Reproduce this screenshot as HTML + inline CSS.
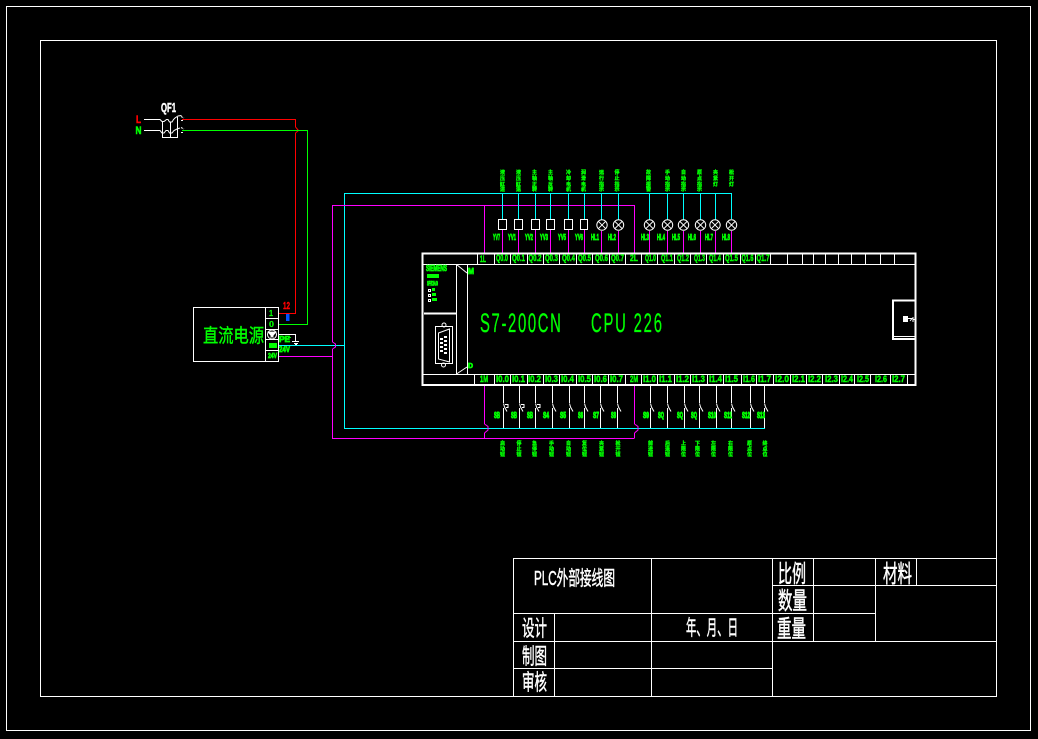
<!DOCTYPE html>
<html><head><meta charset="utf-8"><title>PLC外部接线图</title>
<style>
html,body{margin:0;padding:0;background:#000;width:1038px;height:739px;overflow:hidden}
svg{display:block}
.l{fill:none;stroke:#fff;stroke-width:1;shape-rendering:crispEdges}
.d{fill:none;stroke:#fff;stroke-width:1}
.c{fill:none;stroke:#00ffff;stroke-width:1;shape-rendering:crispEdges}
.m{fill:none;stroke:#ff00ff;stroke-width:1;shape-rendering:crispEdges}
.r{fill:none;stroke:#ff0000;stroke-width:1}
.g{fill:none;stroke:#00ff00;stroke-width:1}
text{font-family:"Liberation Sans","Noto Sans CJK SC",sans-serif}
.w{fill:#fff;font-family:"Liberation Sans","Noto Sans CJK SC",sans-serif;stroke:#fff;stroke-width:.5}
.t{fill:#0f0;stroke:#0f0;stroke-width:.5;font-size:9.5px;font-weight:bold}
.s{fill:#0f0;stroke:#0f0;stroke-width:.35;font-size:5px;font-weight:bold}
.b{fill:#0f0;stroke:#0f0;stroke-width:.8;font-size:8px;font-weight:bold}
</style></head><body>
<svg xmlns="http://www.w3.org/2000/svg" width="1038" height="739" viewBox="0 0 1038 739">
<defs>
<g id="lamp"><circle cx="0" cy="0" r="5.2" fill="none" stroke="#fff" stroke-width="1"/><path d="M-3.7-3.7L3.7 3.7M-3.7 3.7L3.7-3.7" stroke="#fff" stroke-width="1" fill="none"/></g>
<path id="sw" d="M0 403.500L1 407L3.500 411.500" fill="none" stroke="#fff" stroke-width="1"/>
</defs>
<rect width="1038" height="739" fill="#000"/>
<rect class="l" x="6.500" y="6.500" width="1024" height="724"/>
<rect class="l" x="40.500" y="40.500" width="956" height="656"/>

<!-- breaker -->
<text x="136" y="123" font-size="11" font-weight="bold" fill="#f00" stroke="#f00" stroke-width=".6" textLength="5" lengthAdjust="spacingAndGlyphs">L</text>
<text x="135.500" y="134" font-size="11" font-weight="bold" fill="#0f0" stroke="#0f0" stroke-width=".6" textLength="6" lengthAdjust="spacingAndGlyphs">N</text>
<text class="w" x="161" y="112" font-size="13" font-weight="bold" textLength="15" lengthAdjust="spacingAndGlyphs">QF1</text>
<path class="d" d="M144 119.500H160L162 121.500H164L166.500 119.500H168L169.500 122H172L173.500 119.500L175 118L178 116L181.500 115.500"/>
<path class="d" d="M144 130.500H160L162 133H164L166 130.500H168L169.500 133H172L174 130.500L177 129L180 128"/>
<path class="l" d="M162.500 122V137.500H177.500V117M170.500 122V137.500"/>
<path class="d" d="M181 116.500L184 118M181 120.500H184M181 127.500L184 129M181 132.500H184" stroke-dasharray="2 1"/>
<path class="r" style="shape-rendering:crispEdges" d="M182 119.500H295.500V127"/>
<path class="r" d="M295.500 127L298.500 130.500L295.500 133"/>
<path class="r" style="shape-rendering:crispEdges" d="M295.500 133V313.500H279"/>
<path class="g" style="shape-rendering:crispEdges" d="M182 130.500H307.500V324.500H279"/>

<!-- power supply -->
<rect class="l" x="193.500" y="307.500" width="85" height="54"/>
<path class="l" d="M265.500 307V361M265 318.500H279M265 329.500H279M265 339.500H279M265 350.500H279"/>
<text x="203" y="342" font-size="19" fill="#0f0" stroke="#0f0" stroke-width=".4" textLength="61" lengthAdjust="spacingAndGlyphs">直流电源</text>
<text class="t" x="269" y="316" style="font-size:8px;stroke-width:.2" textLength="4" lengthAdjust="spacingAndGlyphs">1</text>
<text class="t" x="269" y="327" style="font-size:8px;stroke-width:.2" textLength="5" lengthAdjust="spacingAndGlyphs">0</text>
<circle cx="272" cy="334.500" r="4.500" fill="none" stroke="#fff" stroke-width="1"/>
<path d="M268 332L276 332L272 337Z M270 337H274" fill="#fff" stroke="#fff" stroke-width=".7"/>
<rect x="269" y="343" width="8" height="5" fill="#0f0"/>
<text class="t" x="268" y="358" style="font-size:7px;stroke-width:.7" textLength="9" lengthAdjust="spacingAndGlyphs">24V</text>
<text x="283" y="309" font-size="10" font-weight="bold" fill="#f00" stroke="#f00" stroke-width=".4" textLength="7" lengthAdjust="spacingAndGlyphs">12</text>
<rect x="286" y="314" width="3.500" height="7" fill="#0050ff"/>
<path class="l" d="M279 334.500H295.500V341"/>
<path class="l" d="M292 341.500H299M294 343.500H298M295 344.500H297"/>
<text class="b" x="279" y="342" style="font-size:8px" textLength="11" lengthAdjust="spacingAndGlyphs">PE</text>
<text class="b" x="279" y="352" style="font-size:8px" textLength="11" lengthAdjust="spacingAndGlyphs">24V</text>
<path class="g" style="shape-rendering:crispEdges" d="M288 337.500H291"/>

<!-- buses -->
<path class="c" d="M279 345.500H344.500V193.500H731.500V219M344.500 345V428.500H765"/>
<path class="m" d="M279 356.500H332.500M332.500 342V205.500H634.500V253M484.500 205V253"/>
<path d="M332.500 342L335.500 344L335.500 347L332.500 349" fill="none" stroke="#f0f" stroke-width="1"/>
<path class="m" d="M332.500 349V438.500H634.500M484.500 385V424M484.500 433V438M634.500 385V424M634.500 433V438"/>
<path d="M484.500 424L488 426.500V430L484.500 433M634.500 424L638 426.500V430L634.500 433" fill="none" stroke="#f0f" stroke-width="1"/>

<!-- top cyan drops -->
<path class="c" d="M502.500 193V219M518.500 193V219M535.500 193V219M550.500 193V219M568.500 193V219M584.500 193V219M601.500 193V220M618.500 193V220M649.500 193V220M667.500 193V220M683.500 193V220M700.500 193V220M715.500 193V220"/>
<path class="m" d="M502.500 229V253M518.500 229V253M535.500 229V253M550.500 229V253M568.500 229V253M584.500 229V253M601.500 231V253M618.500 231V253M649.500 231V253M667.500 231V253M683.500 231V253M700.500 231V253M715.500 231V253M731.500 231V253"/>
<rect class="l" x="498.500" y="219.500" width="8" height="10"/>
<rect class="l" x="514.500" y="219.500" width="8" height="10"/>
<rect class="l" x="531.500" y="219.500" width="8" height="10"/>
<rect class="l" x="546.500" y="219.500" width="8" height="10"/>
<rect class="l" x="564.500" y="219.500" width="8" height="10"/>
<rect class="l" x="580.500" y="219.500" width="7" height="10"/>
<use href="#lamp" x="602" y="225"/><use href="#lamp" x="618.500" y="225"/>
<use href="#lamp" x="649.500" y="225"/><use href="#lamp" x="667.500" y="225"/><use href="#lamp" x="683.500" y="225"/><use href="#lamp" x="700.500" y="225"/><use href="#lamp" x="715" y="225"/><use href="#lamp" x="731.500" y="225"/>

<!-- labels below coils -->
<g class="b">
<text x="493" y="240" textLength="7" lengthAdjust="spacingAndGlyphs">YV7</text>
<text x="508" y="240" textLength="8" lengthAdjust="spacingAndGlyphs">YV1</text>
<text x="525" y="240" textLength="8" lengthAdjust="spacingAndGlyphs">YV2</text>
<text x="540" y="240" textLength="8" lengthAdjust="spacingAndGlyphs">YV3</text>
<text x="558" y="240" textLength="8" lengthAdjust="spacingAndGlyphs">YV5</text>
<text x="575" y="240" textLength="8" lengthAdjust="spacingAndGlyphs">YV6</text>
<text x="591" y="240" textLength="8" lengthAdjust="spacingAndGlyphs">HL1</text>
<text x="608" y="240" textLength="8" lengthAdjust="spacingAndGlyphs">HL2</text>
<text x="641" y="240" textLength="8" lengthAdjust="spacingAndGlyphs">HL3</text>
<text x="657" y="240" textLength="8" lengthAdjust="spacingAndGlyphs">HL4</text>
<text x="672" y="240" textLength="8" lengthAdjust="spacingAndGlyphs">HL5</text>
<text x="688" y="240" textLength="8" lengthAdjust="spacingAndGlyphs">HL6</text>
<text x="705" y="240" textLength="8" lengthAdjust="spacingAndGlyphs">HL7</text>
<text x="722" y="240" textLength="8" lengthAdjust="spacingAndGlyphs">HL8</text>
</g>

<!-- top stacked labels -->
<g class="s">
<text x="500 500 500 500" y="174 180 186 191">液压缸进</text>
<text x="516 516 516 516" y="174 180 186 191">液压缸退</text>
<text x="532 532 532 532" y="174 180 186 191">主轴正转</text>
<text x="548 548 548 548" y="174 180 186 191">主轴反转</text>
<text x="566 566 566 566" y="174 180 186 191">冷却电机</text>
<text x="581 581 581 581" y="174 180 186 191">润滑电机</text>
<text x="599 599 599 599" y="174 180 186 191">运行指示</text>
<text x="614.500 614.500 614.500 614.500" y="174 180 186 191">停止指示</text>
<text x="646 646 646 646" y="174 180 186 191">故障报警</text>
<text x="665 665 665 665" y="174 180 186 191">手动指示</text>
<text x="681 681 681 681" y="174 180 186 191">自动指示</text>
<text x="697 697 697 697" y="174 180 186 191">原点指示</text>
<text x="713 713 713" y="174 180 186">夹紧灯</text>
<text x="729 729 729" y="174 180 186">松开灯</text>
</g>

<!-- PLC body -->
<rect x="422.500" y="253.500" width="493" height="131.500" fill="none" stroke="#fff" stroke-width="2" shape-rendering="crispEdges"/>
<path class="l" d="M423 264.500H915M423 374.500H915M456.500 264V374M467.500 264V374"/>
<path d="M424 313.500H456" stroke="#fff" stroke-width="2" shape-rendering="crispEdges"/>
<path class="d" d="M456.500 264.500L467 273M456.500 374L467 367"/>
<path class="l" d="M477.500 254V264M494.500 254V264M510.500 254V264M527.500 254V264M543.500 254V264M559.500 254V264M576.500 254V264M592.500 254V264M609.500 254V264M625.500 254V264M641.500 254V264M657.500 254V264M674.500 254V264M690.500 254V264M706.500 254V264M723.500 254V264M740.500 254V264M755.500 254V264M770.500 254V264M787.500 254V264M802.500 254V264M813.500 254V264M825.500 254V264M838.500 254V264M851.500 254V264M865.500 254V264M880.500 254V264M894.500 254V264"/>
<path class="l" d="M474.500 375V385M494.500 375V385M510.500 375V385M527.500 375V385M543.500 375V385M559.500 375V385M576.500 375V385M592.500 375V385M608.500 375V385M625.500 375V385M641.500 375V385M657.500 375V385M674.500 375V385M690.500 375V385M707.500 375V385M723.500 375V385M741.500 375V385M756.500 375V385M773.500 375V385M790.500 375V385M806.500 375V385M822.500 375V385M839.500 375V385M854.500 375V385M870.500 375V385M890.500 375V385M907.500 375V385"/>

<!-- top terminal labels -->
<g class="t">
<text x="480" y="262" textLength="6" lengthAdjust="spacingAndGlyphs">1L</text>
<text x="496" y="261" textLength="12" lengthAdjust="spacingAndGlyphs">Q0.0</text>
<text x="512" y="261" textLength="13" lengthAdjust="spacingAndGlyphs">Q0.1</text>
<text x="528.500" y="261" textLength="13" lengthAdjust="spacingAndGlyphs">Q0.2</text>
<text x="545" y="261" textLength="13" lengthAdjust="spacingAndGlyphs">Q0.3</text>
<text x="562" y="261" textLength="13" lengthAdjust="spacingAndGlyphs">Q0.4</text>
<text x="578" y="261" textLength="13" lengthAdjust="spacingAndGlyphs">Q0.5</text>
<text x="595" y="261" textLength="13" lengthAdjust="spacingAndGlyphs">Q0.6</text>
<text x="611" y="261" textLength="13" lengthAdjust="spacingAndGlyphs">Q0.7</text>
<text x="630" y="261" textLength="8" lengthAdjust="spacingAndGlyphs">2L</text>
<text x="645" y="261" textLength="11" lengthAdjust="spacingAndGlyphs">Q1.0</text>
<text x="661" y="261" textLength="12" lengthAdjust="spacingAndGlyphs">Q1.1</text>
<text x="677" y="261" textLength="12" lengthAdjust="spacingAndGlyphs">Q1.2</text>
<text x="694" y="261" textLength="11" lengthAdjust="spacingAndGlyphs">Q1.3</text>
<text x="709" y="261" textLength="12" lengthAdjust="spacingAndGlyphs">Q1.4</text>
<text x="725" y="261" textLength="13" lengthAdjust="spacingAndGlyphs">Q1.5</text>
<text x="741.500" y="261" textLength="12" lengthAdjust="spacingAndGlyphs">Q1.6</text>
<text x="756.500" y="261" textLength="13" lengthAdjust="spacingAndGlyphs">Q1.7</text>
</g>
<!-- bottom terminal labels -->
<g class="t">
<text x="480" y="382" textLength="8" lengthAdjust="spacingAndGlyphs">1M</text>
<text x="496" y="382" textLength="13" lengthAdjust="spacingAndGlyphs">I0.0</text>
<text x="512" y="382" textLength="13" lengthAdjust="spacingAndGlyphs">I0.1</text>
<text x="528" y="382" textLength="13" lengthAdjust="spacingAndGlyphs">I0.2</text>
<text x="545" y="382" textLength="13" lengthAdjust="spacingAndGlyphs">I0.3</text>
<text x="561" y="382" textLength="13" lengthAdjust="spacingAndGlyphs">I0.4</text>
<text x="578" y="382" textLength="13" lengthAdjust="spacingAndGlyphs">I0.5</text>
<text x="594" y="382" textLength="13" lengthAdjust="spacingAndGlyphs">I0.6</text>
<text x="610" y="382" textLength="13" lengthAdjust="spacingAndGlyphs">I0.7</text>
<text x="630" y="382" textLength="8" lengthAdjust="spacingAndGlyphs">2M</text>
<text x="643" y="382" textLength="13" lengthAdjust="spacingAndGlyphs">I1.0</text>
<text x="659" y="382" textLength="13" lengthAdjust="spacingAndGlyphs">I1.1</text>
<text x="676" y="382" textLength="13" lengthAdjust="spacingAndGlyphs">I1.2</text>
<text x="692" y="382" textLength="13" lengthAdjust="spacingAndGlyphs">I1.3</text>
<text x="709" y="382" textLength="13" lengthAdjust="spacingAndGlyphs">I1.4</text>
<text x="725" y="382" textLength="13" lengthAdjust="spacingAndGlyphs">I1.5</text>
<text x="743" y="382" textLength="12" lengthAdjust="spacingAndGlyphs">I1.6</text>
<text x="758" y="382" textLength="13" lengthAdjust="spacingAndGlyphs">I1.7</text>
<text x="775" y="382" textLength="14" lengthAdjust="spacingAndGlyphs">I2.0</text>
<text x="792" y="382" textLength="13" lengthAdjust="spacingAndGlyphs">I2.1</text>
<text x="808" y="382" textLength="13" lengthAdjust="spacingAndGlyphs">I2.2</text>
<text x="825" y="382" textLength="13" lengthAdjust="spacingAndGlyphs">I2.3</text>
<text x="841" y="382" textLength="12" lengthAdjust="spacingAndGlyphs">I2.4</text>
<text x="857" y="382" textLength="12" lengthAdjust="spacingAndGlyphs">I2.5</text>
<text x="875" y="382" textLength="12" lengthAdjust="spacingAndGlyphs">I2.6</text>
<text x="892" y="382" textLength="13" lengthAdjust="spacingAndGlyphs">I2.7</text>
</g>

<!-- main label -->
<text transform="translate(480,332) scale(.55,1)" x="0" y="0" font-size="27" fill="#0f0" stroke="#0f0" stroke-width=".3" textLength="147">S7-200CN</text>
<text transform="translate(591,332) scale(.55,1)" x="0" y="0" font-size="27" fill="#0f0" stroke="#0f0" stroke-width=".3" textLength="129">CPU 226</text>

<!-- left panel -->
<text class="b" x="426" y="271" style="font-size:8px" textLength="21" lengthAdjust="spacingAndGlyphs">SIEMENS</text>
<rect x="427" y="274" width="12" height="4" fill="#0f0"/>
<text class="b" x="427" y="285.500" style="font-size:6px" textLength="11" lengthAdjust="spacingAndGlyphs">SF/DIAG</text>
<rect class="l" x="428.500" y="289.500" width="2" height="2"/><rect class="l" x="428.500" y="294.500" width="2" height="2"/><rect class="l" x="428.500" y="299.500" width="2" height="2"/>
<rect x="432" y="288" width="3" height="3" fill="#0f0"/><rect x="432" y="293" width="4" height="3" fill="#0f0"/><rect x="432" y="298" width="5" height="3" fill="#0f0"/>
<text class="b" x="468" y="274" style="font-size:8px" textLength="6" lengthAdjust="spacingAndGlyphs">M</text>
<text class="b" x="468" y="368" style="font-size:7px" textLength="5" lengthAdjust="spacingAndGlyphs">D</text>
<!-- DB9 -->
<rect class="l" x="435.500" y="326.500" width="17" height="37"/>
<path class="d" d="M438.500 333L449.500 329V362L438.500 359Z"/>
<circle cx="444" cy="325" r="2" fill="none" stroke="#fff"/><circle cx="443.500" cy="365" r="2" fill="none" stroke="#fff"/>
<g fill="#fff"><rect x="444" y="336" width="3" height="2"/><rect x="444" y="340" width="3" height="2"/><rect x="444" y="344" width="3" height="2"/><rect x="444" y="348" width="3" height="2"/><rect x="444" y="352" width="3" height="2"/><rect x="440" y="338" width="3" height="2"/><rect x="440" y="342" width="3" height="2"/><rect x="440" y="346" width="3" height="2"/><rect x="440" y="350" width="3" height="2"/></g>

<!-- right socket -->
<path d="M916 300.500H893V339H916" fill="none" stroke="#fff" stroke-width="2" shape-rendering="crispEdges"/>
<path class="l" d="M894 336.500H915"/>
<rect x="903" y="316" width="5" height="6" fill="#fff"/>
<path class="d" d="M908 318.500H912L910 321M913 317V322M913 319.500H915"/>

<!-- bottom inputs -->
<path class="l" d="M503.500 385V403M519.500 385V403M535.500 385V403M552.500 385V403M569.500 385V403M584.500 385V403M600.500 385V403M617.500 385V403M650.500 385V403M667.500 385V403M684.500 385V403M699.500 385V403M716.500 385V403M731.500 385V403M750.500 385V403M764.500 385V403"/>
<path class="l" d="M503.500 408V428M519.500 408V428M535.500 408V428M552.500 408V428M569.500 408V428M584.500 408V428M600.500 408V428M617.500 408V428M650.500 408V428M667.500 408V428M684.500 408V428M699.500 408V428M716.500 408V428M731.500 408V428M750.500 408V428M764.500 408V428"/>
<use href="#sw" x="503.500"/><use href="#sw" x="519.500"/><use href="#sw" x="535.500"/><use href="#sw" x="552.500"/><use href="#sw" x="569.500"/><use href="#sw" x="584.500"/><use href="#sw" x="600.500"/><use href="#sw" x="617.500"/><use href="#sw" x="650.500"/><use href="#sw" x="667.500"/><use href="#sw" x="684.500"/><use href="#sw" x="699.500"/><use href="#sw" x="716.500"/><use href="#sw" x="731.500"/><use href="#sw" x="750.500"/><use href="#sw" x="764.500"/>
<path class="d" d="M505 404.500H508V407.500H506M521 404.500H524V407.500H522M537 404.500H540V407.500H538"/>
<g class="b" style="font-size:8px;stroke-width:1">
<text x="494" y="418" textLength="6" lengthAdjust="spacingAndGlyphs">SB</text>
<text x="511" y="418" textLength="6" lengthAdjust="spacingAndGlyphs">SB</text>
<text x="527" y="418" textLength="6" lengthAdjust="spacingAndGlyphs">SB</text>
<text x="543" y="418" textLength="6" lengthAdjust="spacingAndGlyphs">S4</text>
<text x="560" y="418" textLength="6" lengthAdjust="spacingAndGlyphs">S5</text>
<text x="578" y="418" textLength="5" lengthAdjust="spacingAndGlyphs">S6</text>
<text x="593" y="418" textLength="6" lengthAdjust="spacingAndGlyphs">S7</text>
<text x="611" y="418" textLength="5" lengthAdjust="spacingAndGlyphs">S8</text>
<text x="643" y="418" textLength="6" lengthAdjust="spacingAndGlyphs">S9</text>
<text x="658" y="418" textLength="6" lengthAdjust="spacingAndGlyphs">SQ</text>
<text x="677" y="418" textLength="6" lengthAdjust="spacingAndGlyphs">SQ</text>
<text x="691" y="418" textLength="6" lengthAdjust="spacingAndGlyphs">SQ</text>
<text x="708" y="418" textLength="8" lengthAdjust="spacingAndGlyphs">S10</text>
<text x="724" y="418" textLength="8" lengthAdjust="spacingAndGlyphs">S11</text>
<text x="742" y="418" textLength="8" lengthAdjust="spacingAndGlyphs">S12</text>
<text x="757" y="418" textLength="8" lengthAdjust="spacingAndGlyphs">S13</text>
</g>
<g class="s">
<text x="500 500 500" y="445 450.500 456">启动钮</text>
<text x="516.500 516.500 516.500" y="445 450.500 456">停止钮</text>
<text x="532 532 532" y="445 450.500 456">急停钮</text>
<text x="549 549 549" y="445 450.500 456">手动钮</text>
<text x="566 566 566" y="445 450.500 456">自动钮</text>
<text x="582 582 582" y="445 450.500 456">复位钮</text>
<text x="599 599 599" y="445 450.500 456">夹紧钮</text>
<text x="615.500 615.500 615.500" y="445 450.500 456">松开钮</text>
<text x="648 648 648" y="445 450.500 456">前进钮</text>
<text x="665 665 665" y="445 450.500 456">后退钮</text>
<text x="681 681 681" y="445 450.500 456">上限位</text>
<text x="695 695 695" y="445 450.500 456">下限位</text>
<text x="711 711 711" y="445 450.500 456">左限位</text>
<text x="728 728 728" y="445 450.500 456">右限位</text>
<text x="747 747 747" y="445 450.500 456">原点位</text>
<text x="762.500 762.500 762.500" y="445 450.500 456">终点位</text>
</g>

<!-- title block -->
<path class="l" d="M513.500 696V558.500H996M651.500 558V696M772.500 558V696M554.500 613V696M813.500 558V641M875.500 558V641M916.500 558V585M772 585.500H996M513 613.500H875M513 641.500H996M513 668.500H772"/>
<text class="w" x="534" y="585" font-size="20" textLength="81" lengthAdjust="spacingAndGlyphs">PLC外部接线图</text>
<text class="w" x="522" y="636" font-size="22" textLength="25" lengthAdjust="spacingAndGlyphs">设计</text>
<text class="w" x="522" y="664" font-size="22" textLength="25" lengthAdjust="spacingAndGlyphs">制图</text>
<text class="w" x="522" y="690" font-size="22" textLength="25" lengthAdjust="spacingAndGlyphs">审核</text>
<text class="w" x="686" y="635" font-size="21" textLength="52" lengthAdjust="spacingAndGlyphs">年、月、日</text>
<text class="w" x="778" y="582" font-size="24" textLength="28" lengthAdjust="spacingAndGlyphs">比例</text>
<text class="w" x="778" y="609" font-size="24" textLength="29" lengthAdjust="spacingAndGlyphs">数量</text>
<text class="w" x="777" y="637" font-size="24" textLength="29" lengthAdjust="spacingAndGlyphs">重量</text>
<text class="w" x="883" y="582" font-size="24" textLength="29" lengthAdjust="spacingAndGlyphs">材料</text>
</svg>
</body></html>
